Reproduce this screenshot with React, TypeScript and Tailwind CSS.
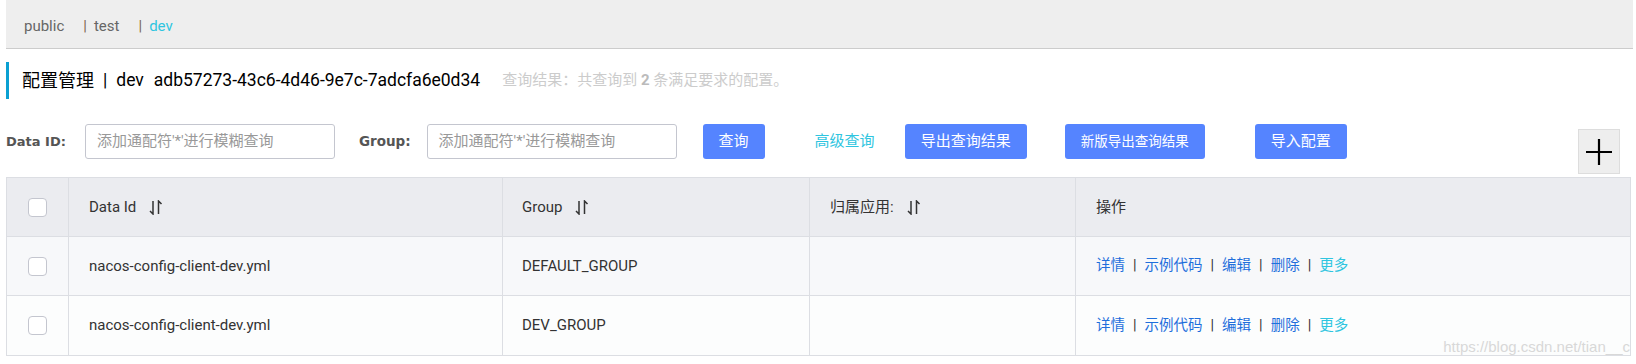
const rows = [
  { id: 'nacos-config-client-dev.yml', group: 'DEFAULT_GROUP', bg: 'bg-[#f7f8fa]' },
  { id: 'nacos-config-client-dev.yml', group: 'DEV_GROUP', bg: 'bg-[#fcfdfd]' },
];

function SortIcon() {
  return (
    <svg width="15" height="15" viewBox="0 0 15 15" fill="none" stroke="#333" strokeWidth="1.5" className="ml-[12px]">
      <path d="M5 1v13L2 11M10.5 14V1l3 3" />
    </svg>
  );
}

function Checkbox() {
  return <div className="w-[19px] h-[19px] rounded-[4px] border border-[#c4c6cf] bg-white" />;
}

function Sep() {
  return <span className="mx-[8px] text-[#333]">|</span>;
}

export default function App() {
  return (
    <div className="relative w-[1636px] h-[364px] overflow-hidden bg-white font-['Roboto','Noto_Sans_CJK_SC',sans-serif] text-[15px] text-[#333]">
      {/* namespace bar */}
      <div className="ml-[6px] mr-[3px] h-[49px] flex items-center pl-[18px] pt-[4px] bg-[#eeeeee] border-b border-[#cccccc] text-[#666]">
        <span>public</span>
        <span className="ml-[19px] mr-[7px] text-[#7a6650]">|</span>
        <span>test</span>
        <span className="ml-[19px] mr-[7px] text-[#7a6650]">|</span>
        <span className="text-[#2fc5e0]">dev</span>
      </div>

      {/* title */}
      <div className="ml-[6px] mt-[13px] h-[37px] flex items-center border-l-[3px] border-[#0aa0d2] pl-[13px] text-black">
        <span className="text-[18px]">配置管理</span>
        <span className="text-[17.5px] mx-[9px]">|</span>
        <span className="text-[17.5px]">dev</span>
        <span className="text-[17.5px] ml-[10px]">adb57273-43c6-4d46-9e7c-7adcfa6e0d34</span>
        <span className="ml-[22px] text-[#cccccc]">
          查询结果：共查询到 <strong className="font-bold text-[#bbbbbb]">2</strong> 条满足要求的配置。
        </span>
      </div>

      {/* search row */}
      <div className="mt-[25px] ml-[6px] flex items-start">
        <div className="h-[35px] flex items-center">
          <span className="font-['DejaVu_Sans',sans-serif] font-bold text-[13px] text-[#555]">Data ID:</span>
          <div className="ml-[19px] w-[250px] h-[35px] flex items-center px-[11px] border border-[#c4c6cf] rounded-[3px] text-[#999]">
            添加通配符'*'进行模糊查询
          </div>
          <span className="ml-[24px] font-['DejaVu_Sans',sans-serif] font-bold text-[13.5px] text-[#555]">Group:</span>
          <div className="ml-[16px] w-[250px] h-[35px] flex items-center px-[11px] border border-[#c4c6cf] rounded-[3px] text-[#999]">
            添加通配符'*'进行模糊查询
          </div>
          <button className="ml-[26px] h-[35px] px-[16px] rounded-[3px] bg-[#5584ff] text-white">查询</button>
          <button className="ml-[50px] h-[35px] text-[#2fc5e0]">高级查询</button>
          <button className="ml-[30px] h-[35px] px-[16px] rounded-[3px] bg-[#5584ff] text-white">导出查询结果</button>
          <button className="ml-[38px] h-[35px] px-[16px] rounded-[3px] bg-[#5584ff] text-white text-[13.5px]">新版导出查询结果</button>
          <button className="ml-[50px] h-[35px] px-[16px] rounded-[3px] bg-[#5584ff] text-white">导入配置</button>
        </div>
        <div className="ml-auto mr-[16px] mt-[5px] w-[42px] h-[45px] flex items-center justify-center bg-[#eeeeee] border border-[#dddddd]">
          <svg width="26" height="26" viewBox="0 0 26 26" stroke="#000" strokeWidth="2.2">
            <path d="M0 13h26M13 0v26" />
          </svg>
        </div>
      </div>

      {/* table */}
      <div className="mt-[3px] ml-[6px] w-[1625px] border border-[#dcdee3]">
        <div className="grid grid-cols-[62px_434px_307px_266px_1fr] h-[59px] bg-[#ebecf0] border-b border-[#dcdee3]">
          <div className="flex items-center justify-center border-r border-[#dcdee3]">
            <Checkbox />
          </div>
          <div className="flex items-center pl-[20px] border-r border-[#dcdee3]">
            Data Id <SortIcon />
          </div>
          <div className="flex items-center pl-[19px] border-r border-[#dcdee3]">
            Group <SortIcon />
          </div>
          <div className="flex items-center pl-[20px] border-r border-[#dcdee3]">
            归属应用: <SortIcon />
          </div>
          <div className="flex items-center pl-[20px]">操作</div>
        </div>
        {rows.map((r, i) => (
          <div
            key={i}
            className={`grid grid-cols-[62px_434px_307px_266px_1fr] h-[59px] ${r.bg} ${
              i < rows.length - 1 ? 'border-b border-[#dcdee3]' : ''
            }`}
          >
            <div className="flex items-center justify-center border-r border-[#dcdee3]">
              <Checkbox />
            </div>
            <div className="flex items-center pl-[20px] border-r border-[#dcdee3]">{r.id}</div>
            <div className="flex items-center pl-[19px] border-r border-[#dcdee3]">{r.group}</div>
            <div className="border-r border-[#dcdee3]" />
            <div className="flex items-center pl-[20px] text-[#1f6fdc] text-[14.5px]">
              <span>详情</span>
              <Sep />
              <span>示例代码</span>
              <Sep />
              <span>编辑</span>
              <Sep />
              <span>删除</span>
              <Sep />
              <span className="text-[#2fc5e0]">更多</span>
            </div>
          </div>
        ))}
      </div>

      {/* watermark */}
      <div className="absolute right-[6px] bottom-[6px] text-[15px] text-[#d8d8d8] font-['Liberation_Sans',sans-serif]">
        https://blog.csdn.net/tian__c
      </div>
    </div>
  );
}
